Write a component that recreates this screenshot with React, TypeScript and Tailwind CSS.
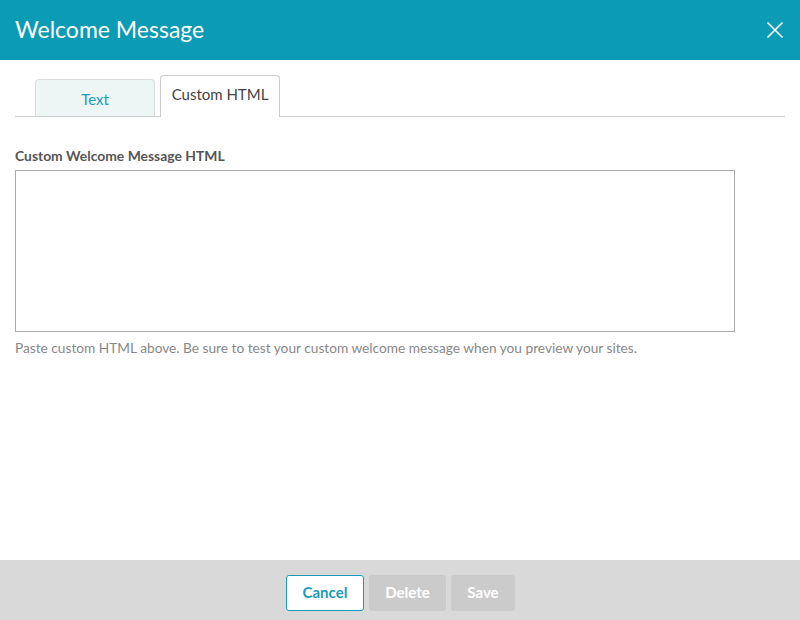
import React from 'react';

export default function App() {
  return (
    <div className="w-[800px] h-[620px] flex flex-col bg-white font-['Lato',sans-serif] overflow-hidden">
      {/* Header */}
      <header className="h-[60px] shrink-0 bg-[#0b9bb5] flex items-center justify-between pl-[15px] pr-[16px]">
        <h1 className="text-[23px] text-white font-normal leading-none pb-[1px]">Welcome Message</h1>
        <button className="w-[18px] h-[18px] flex items-center justify-center">
          <svg width="18" height="18" viewBox="0 0 18 18" fill="none" stroke="white" strokeWidth="1.6">
            <path d="M1.5 1.5 L16.5 16.5 M16.5 1.5 L1.5 16.5" />
          </svg>
        </button>
      </header>

      {/* Body */}
      <main className="flex-1 px-[15px] pt-[15px]">
        <div className="flex items-end gap-[5px] pl-[20px] border-b border-[#cccccc] h-[42px]">
          <div className="w-[120px] h-[37px] bg-[#eef5f5] border border-b-0 border-[#d8dddd] rounded-t-[4px] flex items-center justify-center text-[15px] text-[#1a9cb8] pt-[3px]">
            Text
          </div>
          <div className="w-[120px] h-[42px] bg-white border border-b-0 border-[#cccccc] rounded-t-[4px] flex items-center justify-center text-[15px] text-[#444444] -mb-px pb-[4px]">
            Custom HTML
          </div>
        </div>

        <label className="block mt-[30px] text-[13.9px] font-bold text-[#555555] leading-[17px]">
          Custom Welcome Message HTML
        </label>
        <textarea className="block mt-[6px] w-[720px] h-[162px] border border-[#aaaaaa] resize-none outline-none" />
        <p className="mt-[8px] text-[13.7px] text-[#888888] leading-[16px]">
          Paste custom HTML above. Be sure to test your custom welcome message when you preview your sites.
        </p>
      </main>

      {/* Footer */}
      <footer className="h-[60px] shrink-0 bg-[#d9d9d9] flex items-center justify-center gap-[5px] pl-[1px] pt-[5px]">
        <button className="w-[78px] h-[36px] bg-white border border-[#1a9cb8] rounded-[3px] text-[15px] font-bold text-[#1a9cb8]">
          Cancel
        </button>
        <button className="w-[77px] h-[36px] bg-[#cbcbcb] rounded-[3px] text-[15px] font-bold text-white">
          Delete
        </button>
        <button className="w-[64px] h-[36px] bg-[#cbcbcb] rounded-[3px] text-[15px] font-bold text-white">
          Save
        </button>
      </footer>
    </div>
  );
}
